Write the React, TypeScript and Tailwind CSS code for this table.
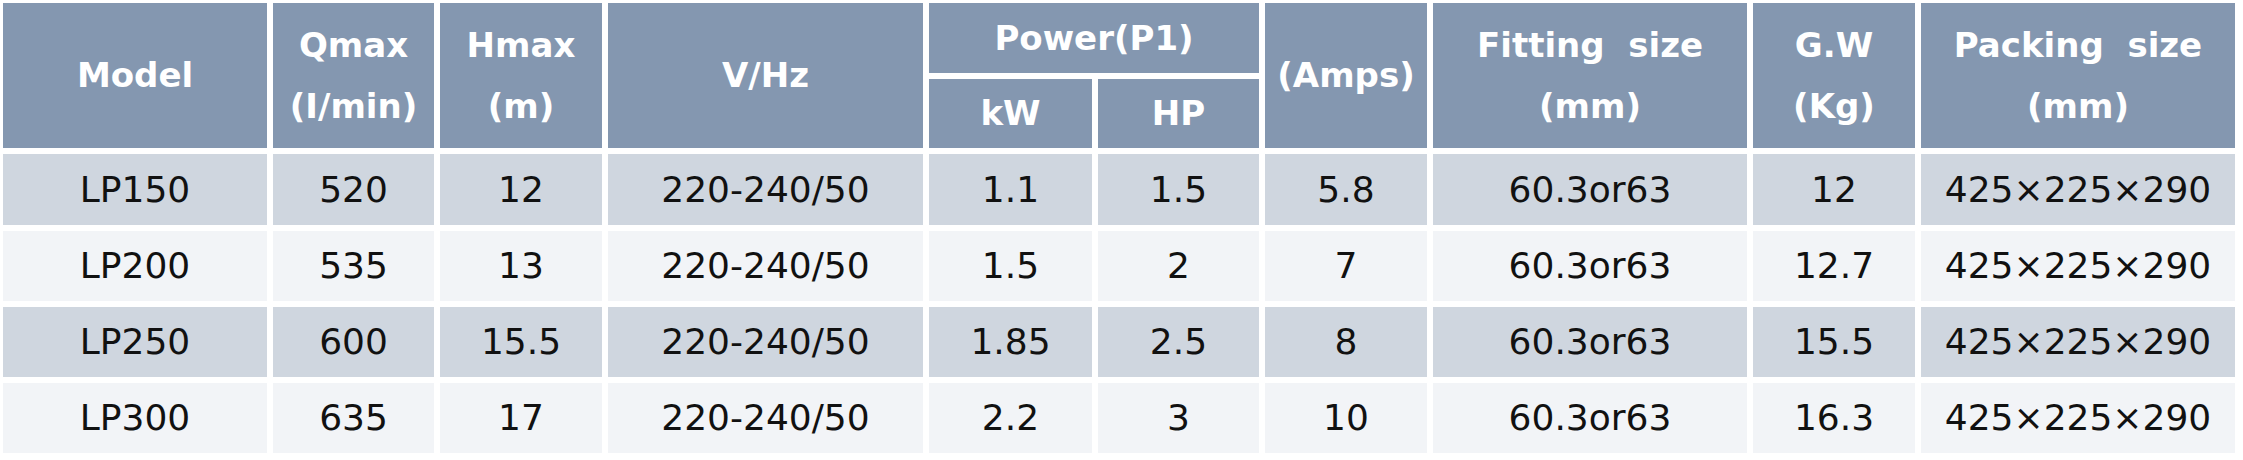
import React from 'react';

const rows = [
  ['LP150', '520', '12', '220-240/50', '1.1', '1.5', '5.8', '60.3or63', '12', '425×225×290'],
  ['LP200', '535', '13', '220-240/50', '1.5', '2', '7', '60.3or63', '12.7', '425×225×290'],
  ['LP250', '600', '15.5', '220-240/50', '1.85', '2.5', '8', '60.3or63', '15.5', '425×225×290'],
  ['LP300', '635', '17', '220-240/50', '2.2', '3', '10', '60.3or63', '16.3', '425×225×290'],
];

const head = 'flex flex-col items-center justify-center bg-[#8497b0] text-white font-bold text-[34px] leading-[61px] text-center whitespace-pre';
const cell = 'flex items-center justify-center text-[36px] text-[#111]';

const App = () => {
  return (
    <div className="w-[2243px] h-[460px] bg-white p-[3px] font-['DejaVu_Sans',sans-serif]">
      <div className="grid grid-cols-[264px_161px_162px_315px_163px_161px_162px_314px_162px_314px] grid-rows-[70px_69px_71px_70px_70px_70px] gap-[6px]">
        <div className={`${head} row-span-2`}>Model</div>
        <div className={`${head} row-span-2`}>
          <span>Qmax</span>
          <span>(I/min)</span>
        </div>
        <div className={`${head} row-span-2`}>
          <span>Hmax</span>
          <span>(m)</span>
        </div>
        <div className={`${head} row-span-2`}>V/Hz</div>
        <div className={`${head} col-span-2`}>Power(P1)</div>
        <div className={`${head} row-span-2`}>(Amps)</div>
        <div className={`${head} row-span-2`}>
          <span>{'Fitting  size'}</span>
          <span>(mm)</span>
        </div>
        <div className={`${head} row-span-2`}>
          <span>G.W</span>
          <span>(Kg)</span>
        </div>
        <div className={`${head} row-span-2`}>
          <span>{'Packing  size'}</span>
          <span>(mm)</span>
        </div>
        <div className={head}>kW</div>
        <div className={head}>HP</div>

        {rows.map((r, i) =>
          r.map((v, j) => (
            <div key={`${i}-${j}`} className={`${cell} ${i % 2 === 0 ? 'bg-[#cfd6df]' : 'bg-[#f2f4f7]'}`}>
              {v}
            </div>
          ))
        )}
      </div>
    </div>
  );
};

export default App;
